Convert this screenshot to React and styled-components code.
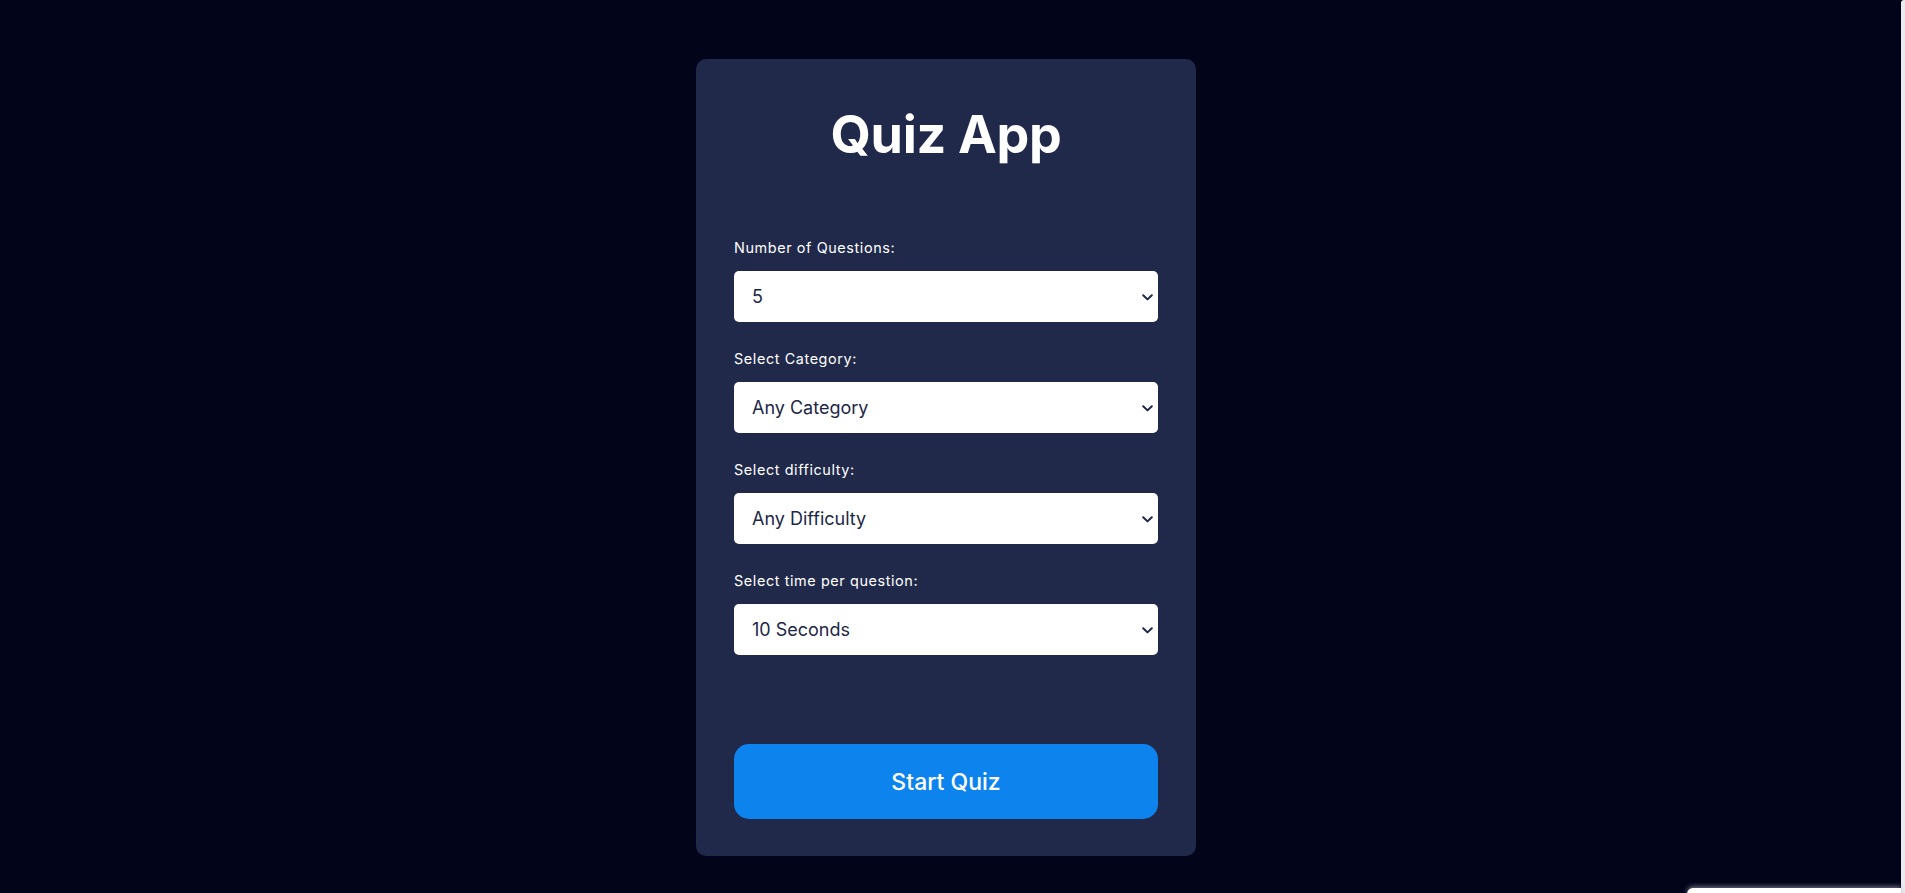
import React from "react";
import styled, { createGlobalStyle } from "styled-components";

const GlobalStyle = createGlobalStyle`
  html, body {
    margin: 0;
    padding: 0;
    background: #02051a;
  }
  body {
    font-family: "Poppins", Inter, "Noto Sans", sans-serif;
    overflow: hidden;
  }
  * { box-sizing: border-box; }
`;

const Page = styled.main`
  min-height: 100vh;
  display: flex;
  justify-content: center;
  align-items: flex-start;
  padding: 59px 13px 0 0;
  background: #02051a;
`;

const Card = styled.section`
  width: 500px;
  background: #20294a;
  border-radius: 10px;
  padding: 38px 38px 37px;
  display: flex;
  flex-direction: column;
`;

const Title = styled.h1`
  margin: 7px 0 0;
  font-family: Inter, sans-serif;
  font-size: 52px;
  font-weight: 700;
  line-height: 62px;
  letter-spacing: -0.3px;
  color: #ffffff;
  text-align: center;
`;

const Form = styled.div`
  display: flex;
  flex-direction: column;
  gap: 27px;
  margin-top: 72px;
`;

const Field = styled.div`
  display: flex;
  flex-direction: column;
  gap: 13px;
`;

const Label = styled.label`
  font-family: Inter, sans-serif;
  font-size: 14.4px;
  line-height: 20px;
  font-weight: 400;
  letter-spacing: 0.6px;
  color: #ffffff;
`;

const SelectWrap = styled.div`
  position: relative;
  width: 100%;
`;

const Select = styled.select`
  appearance: none;
  -webkit-appearance: none;
  display: block;
  width: 100%;
  height: 51px;
  border: none;
  border-radius: 5px;
  background: #ffffff;
  color: #1d2746;
  font-family: Inter, sans-serif;
  font-size: 18px;
  padding: 0 36px 0 18px;
  outline: none;
`;

const Chevron = styled.svg`
  position: absolute;
  right: 5px;
  top: 50%;
  width: 11px;
  height: 7px;
  margin-top: -3px;
  pointer-events: none;
`;

const StartButton = styled.button`
  margin-top: 89px;
  width: 100%;
  height: 75px;
  border: none;
  border-radius: 15px;
  background: #0d83ee;
  color: #ffffff;
  font-family: Inter, sans-serif;
  font-size: 23px;
  font-weight: 500;
  cursor: pointer;
`;

const EdgeStrip = styled.div`
  position: fixed;
  top: 0;
  right: 0;
  width: 4px;
  height: 100vh;
  background: #ececef;
  border-top-left-radius: 3px;
`;

const CornerBox = styled.div`
  position: fixed;
  left: 1687px;
  right: 4px;
  bottom: -20px;
  height: 25px;
  background: #ffffff;
  border-top-left-radius: 6px;
  box-shadow: 0 -2px 4px rgba(160, 160, 180, 0.6);
`;

const fields = [
  { label: "Number of Questions:", options: ["5", "10", "15", "20"] },
  {
    label: "Select Category:",
    options: ["Any Category", "General Knowledge", "Science & Nature", "History", "Sports"],
  },
  { label: "Select difficulty:", options: ["Any Difficulty", "Easy", "Medium", "Hard"] },
  {
    label: "Select time per question:",
    options: ["10 Seconds", "15 Seconds", "20 Seconds", "30 Seconds"],
  },
];

export default function App() {
  return (
    <>
      <GlobalStyle />
      <Page>
        <Card>
          <Title>Quiz App</Title>
          <Form>
            {fields.map((f, i) => (
              <Field key={i}>
                <Label htmlFor={`f${i}`}>{f.label}</Label>
                <SelectWrap>
                  <Select id={`f${i}`} defaultValue={f.options[0]}>
                    {f.options.map((o) => (
                      <option key={o} value={o}>
                        {o}
                      </option>
                    ))}
                  </Select>
                  <Chevron viewBox="0 0 11 7" aria-hidden="true">
                    <path
                      d="M1.2 1.2 L5.5 5.4 L9.8 1.2"
                      fill="none"
                      stroke="#1d2746"
                      strokeWidth="2"
                      strokeLinecap="round"
                      strokeLinejoin="round"
                    />
                  </Chevron>
                </SelectWrap>
              </Field>
            ))}
          </Form>
          <StartButton>Start Quiz</StartButton>
        </Card>
      </Page>
      <EdgeStrip />
      <CornerBox />
    </>
  );
}
